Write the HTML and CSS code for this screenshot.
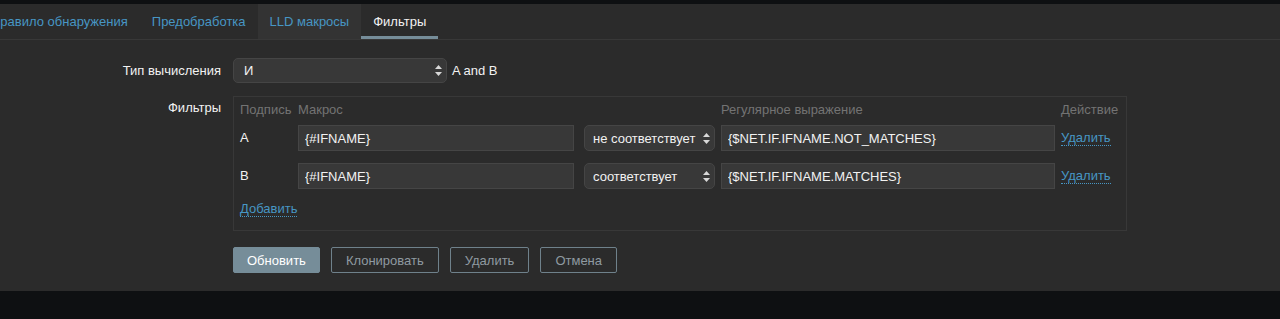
FILE: index.html
```html
<!DOCTYPE html>
<html lang="ru">
<head>
    <meta charset="UTF-8">
    <title>Фильтры</title>
    <link rel="stylesheet" href="styles.css">
</head>
<body>
<div class="top-strip"></div>
<div class="page">
    <ul class="tabs">
        <li class="tab">Правило обнаружения</li>
        <li class="tab">Предобработка</li>
        <li class="tab hover">LLD макросы</li>
        <li class="tab active">Фильтры</li>
    </ul>

    <div class="form">
        <div class="form-row">
            <label class="form-label">Тип вычисления</label>
            <div class="form-field">
                <span class="select-wrap calc-select">
                    <select><option>И</option></select>
                    <svg class="arrows" width="7" height="11" viewBox="0 0 7 11"><path d="M3.5 0L7 4H0z M3.5 11L0 7h7z" fill="#d8d8d8"/></svg>
                </span>
                <span class="formula">A and B</span>
            </div>
        </div>

        <div class="form-row">
            <label class="form-label filters-label">Фильтры</label>
            <div class="form-field">
                <div class="filter-box">
                    <div class="filter-grid">
                        <div class="th">Подпись</div>
                        <div class="th">Макрос</div>
                        <div class="th"></div>
                        <div class="th">Регулярное выражение</div>
                        <div class="th">Действие</div>

                        <div class="td">A</div>
                        <div class="td"><input class="macro" type="text" value="{#IFNAME}"></div>
                        <div class="td">
                            <span class="select-wrap op-select">
                                <select><option>не соответствует</option></select>
                                <svg class="arrows" width="7" height="11" viewBox="0 0 7 11"><path d="M3.5 0L7 4H0z M3.5 11L0 7h7z" fill="#d8d8d8"/></svg>
                            </span>
                        </div>
                        <div class="td"><input class="regex" type="text" value="{$NET.IF.IFNAME.NOT_MATCHES}"></div>
                        <div class="td"><a class="link">Удалить</a></div>

                        <div class="td">B</div>
                        <div class="td"><input class="macro" type="text" value="{#IFNAME}"></div>
                        <div class="td">
                            <span class="select-wrap op-select">
                                <select><option>соответствует</option></select>
                                <svg class="arrows" width="7" height="11" viewBox="0 0 7 11"><path d="M3.5 0L7 4H0z M3.5 11L0 7h7z" fill="#d8d8d8"/></svg>
                            </span>
                        </div>
                        <div class="td"><input class="regex" type="text" value="{$NET.IF.IFNAME.MATCHES}"></div>
                        <div class="td"><a class="link">Удалить</a></div>
                    </div>
                    <a class="link add-link">Добавить</a>
                </div>
            </div>
        </div>

        <div class="form-row">
            <div class="form-label"></div>
            <div class="form-field buttons">
                <button class="btn">Обновить</button>
                <button class="btn btn-alt">Клонировать</button>
                <button class="btn btn-alt">Удалить</button>
                <button class="btn btn-alt">Отмена</button>
            </div>
        </div>
    </div>
</div>
</body>
</html>
```

FILE: styles.css
```css
body {
    margin: 0;
    background-color: #0e1012;
    font-family: "Liberation Sans", Arial, sans-serif;
    font-size: 13px;
    color: #f2f2f2;
}

.top-strip {
    height: 4px;
    background-color: #0e1012;
}

.page {
    background-color: #2b2b2b;
    padding-bottom: 18px;
    overflow: hidden;
}

/* первая вкладка обрезана слева, как на исходной странице */
.tabs {
    list-style: none;
    margin: 0 0 0 -21px;
    padding: 0;
    display: flex;
    height: 35px;
    border-bottom: 1px solid #383838;
}

.tab {
    padding: 0 12px;
    line-height: 35px;
    color: #4796c4;
    white-space: nowrap;
}

.tab.hover {
    background-color: #333333;
}

.tab.active {
    color: #f2f2f2;
    box-shadow: inset 0 -3px 0 #768d99;
}

.form {
    padding-top: 18px;
}

.form-row {
    display: flex;
    margin-bottom: 13px;
}

.form-row:last-child {
    margin-bottom: 0;
}

.form-label {
    width: 221px;
    flex-shrink: 0;
    padding-right: 12px;
    text-align: right;
    line-height: 25px;
}

.filters-label {
    line-height: 24px;
}

.form-field {
    display: flex;
    align-items: center;
}

.select-wrap {
    position: relative;
    display: inline-block;
}

select {
    appearance: none;
    -webkit-appearance: none;
    box-sizing: border-box;
    background-color: #383838;
    border: 1px solid #454545;
    border-radius: 5px;
    color: #f2f2f2;
    font-family: inherit;
    font-size: 13px;
    height: 26px;
    padding: 0 10px;
    outline: none;
    vertical-align: top;
}

.select-wrap .arrows {
    position: absolute;
    right: 5px;
    top: 8px;
}

.calc-select select {
    width: 214px;
    height: 25px;
}

.calc-select .arrows {
    top: 7px;
}

.formula {
    margin-left: 5px;
}

.filter-box {
    width: 880px;
    border: 1px solid #383838;
    padding: 5px 6px 13px 6px;
}

.filter-grid {
    display: grid;
    grid-template-columns: 58px 286px 137px 340px 1fr;
    grid-template-rows: 16px 33px 38px;
    align-items: end;
    margin-bottom: 12px;
}

.th {
    color: #737373;
    white-space: nowrap;
    line-height: 16px;
}

.td {
    white-space: nowrap;
    height: 26px;
    line-height: 26px;
}

input {
    box-sizing: border-box;
    height: 26px;
    background-color: #383838;
    border: 1px solid #454545;
    color: #f2f2f2;
    font-family: inherit;
    font-size: 13px;
    padding: 0 6px;
    outline: none;
    vertical-align: top;
}

.macro {
    width: 276px;
}

.regex {
    width: 334px;
}

.op-select select {
    width: 131px;
    padding-left: 8px;
}

.link {
    color: #4796c4;
    border-bottom: 1px dotted #4796c4;
    cursor: pointer;
}

.add-link {
    display: inline-block;
    line-height: 15px;
}

.buttons {
    padding-top: 3px;
    gap: 11px;
}

.btn {
    height: 26px;
    padding: 0 13px;
    border: 1px solid #768d99;
    border-radius: 2px;
    background-color: #768d99;
    color: #ffffff;
    font-family: inherit;
    font-size: 13px;
    cursor: pointer;
}

.btn-alt {
    padding: 0 14px;
    background-color: transparent;
    color: #8f9aa1;
    border-color: #6f818b;
}
```
